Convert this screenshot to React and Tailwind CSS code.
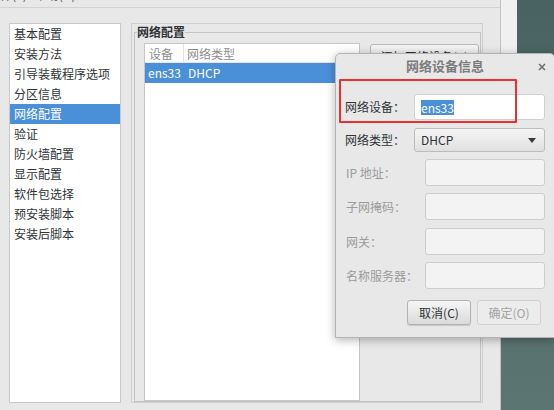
import React from "react";

const sections = [
  "基本配置",
  "安装方法",
  "引导装载程序选项",
  "分区信息",
  "网络配置",
  "验证",
  "防火墙配置",
  "显示配置",
  "软件包选择",
  "预安装脚本",
  "安装后脚本",
];

function Field({ label, className = "" }) {
  return (
    <div className={`flex items-center justify-between h-[27px] ${className}`}>
      <span className="text-[#9b9b9b] pl-[1px]">{label}</span>
      <div className="w-[120px] h-full bg-[#f3f3f3] border border-[#cdcdcd] rounded-[3px]" />
    </div>
  );
}

function DeviceDialog() {
  return (
    <div className="absolute left-[335px] top-[53px] w-[220px] h-[285px] bg-[#e8e8e8] border border-[#b4b4b4] rounded-t-[5px] shadow-[0_2px_10px_rgba(0,0,0,0.3)]">
      <div className="relative h-[24px] flex items-center justify-center">
        <span className="text-[13px] font-bold text-[#7c7c7c]">网络设备信息</span>
        <svg className="absolute right-[8px] top-[9px]" width="8" height="8" viewBox="0 0 8 8">
          <path d="M1 1 L7 7 M7 1 L1 7" stroke="#6f6f6f" strokeWidth="1.6" />
        </svg>
      </div>

      <div className="px-[9px]">
        <div className="mt-[16px] flex items-center justify-between h-[26px]">
          <span>网络设备：</span>
          <div className="w-[131px] h-full bg-white border border-[#cfcfcf] rounded-[3px] px-[6px] flex items-center">
            <span className="bg-[#4a90d9] text-white leading-[15px]">ens33</span>
          </div>
        </div>

        <div className="mt-[8px] flex items-center justify-between h-[24px]">
          <span>网络类型：</span>
          <div className="w-[131px] h-full bg-gradient-to-b from-[#f5f5f5] to-[#e0e0e0] border border-[#bcbcbc] rounded-[3px] pl-[6px] pr-[8px] flex items-center justify-between">
            <span>DHCP</span>
            <svg width="8" height="5" viewBox="0 0 8 5">
              <path d="M0 0 H8 L4 5 Z" fill="#3a3a3a" />
            </svg>
          </div>
        </div>

        <Field label="IP 地址：" className="mt-[7px]" />
        <Field label="子网掩码：" className="mt-[7px] h-[26px]" />
        <Field label="网关：" className="mt-[8px] h-[25px]" />
        <Field label="名称服务器：" className="mt-[7px]" />

        <div className="mt-[11px] mr-[4px] flex justify-end gap-[6px]">
          <button className="w-[64px] h-[25px] bg-gradient-to-b from-[#f6f6f6] to-[#dadada] border border-[#b3b3b3] rounded-[3px] shadow-[0_1px_1px_rgba(0,0,0,0.15)] text-[#2e3436]">
            取消(C)
          </button>
          <button className="w-[64px] h-[25px] bg-[#ececec] border border-[#d0d0d0] rounded-[3px] text-[#a3a3a3]">
            确定(O)
          </button>
        </div>
      </div>

      <div className="absolute left-[3px] top-[25px] w-[178px] h-[44px] border-2 border-[#e8312f] rounded-[1px]" />
    </div>
  );
}

export default function App() {
  return (
    <div className="relative w-[554px] h-[410px] overflow-hidden flex bg-[#e8e8e8] text-[12px] text-[#2e3436] font-['Noto_Sans_CJK_SC','DejaVu_Sans',sans-serif]">
      <div className="w-[501px] flex flex-col border-r border-[#c2c2c2]">
        <div className="h-[8px] overflow-hidden border-b border-[#d3d3d3]">
          <div className="-mt-[13px] -ml-[12px] leading-[16px] text-[#555] whitespace-pre">
            文件(F)   帮助(H)
          </div>
        </div>

        <div className="flex pl-[9px] pt-[15px] gap-[10px]">
          <ul className="w-[112px] h-[380px] bg-white border border-[#c9c9c9]">
            {sections.map((s) => (
              <li
                key={s}
                className={`h-[20px] leading-[20px] pl-[4px] ${s === "网络配置" ? "bg-[#4a90d9] text-white" : ""}`}
              >
                {s}
              </li>
            ))}
          </ul>

          <div className="w-[352px] h-[380px] border border-[#cfcfcf] flex">
            <fieldset className="flex-1 ml-[2px] mr-[1px] border border-[#c4c4c4] flex">
              <legend className="ml-[2px] font-bold leading-[16px] text-[#2e3436]">网络配置</legend>
              <div className="flex flex-1 pl-[9px] pt-[3px]">
                <div className="w-[216px] bg-white border border-[#c6c6c6]">
                  <div className="flex h-[19px] leading-[19px] text-[#8e8e8e] border-b border-[#e6e6e6]">
                    <span className="w-[39px] pl-[4px] border-r border-[#e2e2e2]">设备</span>
                    <span className="pl-[3px]">网络类型</span>
                  </div>
                  <div className="flex h-[20px] leading-[20px] bg-[#4a90d9] text-white">
                    <span className="w-[39px] pl-[3px]">ens33</span>
                    <span className="pl-[4px]">DHCP</span>
                  </div>
                </div>
                <div className="ml-[10px] mt-[1px]">
                  <button className="w-[109px] h-[26px] bg-gradient-to-b from-[#f4f4f4] to-[#dedede] border border-[#b9b9b9] rounded-[3px] text-[#2e3436]">
                    添加网络设备(A)
                  </button>
                </div>
              </div>
            </fieldset>
          </div>
        </div>
      </div>

      <div className="flex-1 flex flex-col bg-gradient-to-b from-[#486361] to-[#5b7572]">
        <div className="w-[16px] h-[200px] bg-[#f0f0f0]" />
      </div>

      <DeviceDialog />
    </div>
  );
}
